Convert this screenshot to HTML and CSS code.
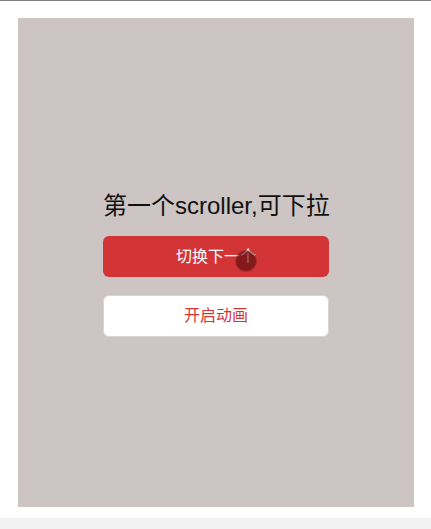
FILE: index.html
```html
<!DOCTYPE html>
<html>
<head>
<meta charset="utf-8">
<link rel="stylesheet" href="styles.css">
</head>
<body>
<div class="topline"></div>
<div class="page">
  <div class="scroller">
    <div class="content">
      <div class="title">第一个scroller,可下拉</div>
      <div class="btn btn-primary">切换下一个<span class="touch"></span></div>
      <div class="btn btn-plain">开启动画</div>
    </div>
  </div>
</div>
<div class="footer"></div>
</body>
</html>
```
FILE: styles.css
```css
html, body {
  margin: 0;
  padding: 0;
  background: #ffffff;
  font-family: "Liberation Sans", "Noto Sans CJK SC", sans-serif;
}
.topline {
  height: 1px;
  background: #7f7f7f;
}
.page {
  padding: 17px 17px 0 18px;
  height: 500px;
}
.scroller {
  width: 396px;
  height: 489px;
  background: #cdc4c4;
  display: flex;
  justify-content: center;
}
.content {
  width: 226px;
  padding-top: 173px;
  display: flex;
  flex-direction: column;
}
.title {
  font-size: 24px;
  line-height: 30px;
  height: 30px;
  color: #111;
  text-align: center;
  white-space: nowrap;
  margin-bottom: 15px;
}
.btn {
  position: relative;
  box-sizing: border-box;
  height: 41px;
  border-radius: 6px;
  font-size: 16px;
  line-height: 41px;
  text-align: center;
}
.btn-primary {
  background: #d33537;
  color: #ffffff;
  margin-bottom: 18px;
}
.btn-plain {
  height: 42px;
  line-height: 40px;
  background: #ffffff;
  color: #d33537;
  border: 1px solid #d9d4d4;
}
.touch {
  position: absolute;
  left: 133px;
  top: 15px;
  width: 20px;
  height: 20px;
  border-radius: 50%;
  background: rgba(90, 10, 10, 0.65);
  box-shadow: 0 0 0 1px rgba(120, 40, 40, 0.5);
}
.footer {
  height: 11px;
  background: #f2f2f2;
}
```
